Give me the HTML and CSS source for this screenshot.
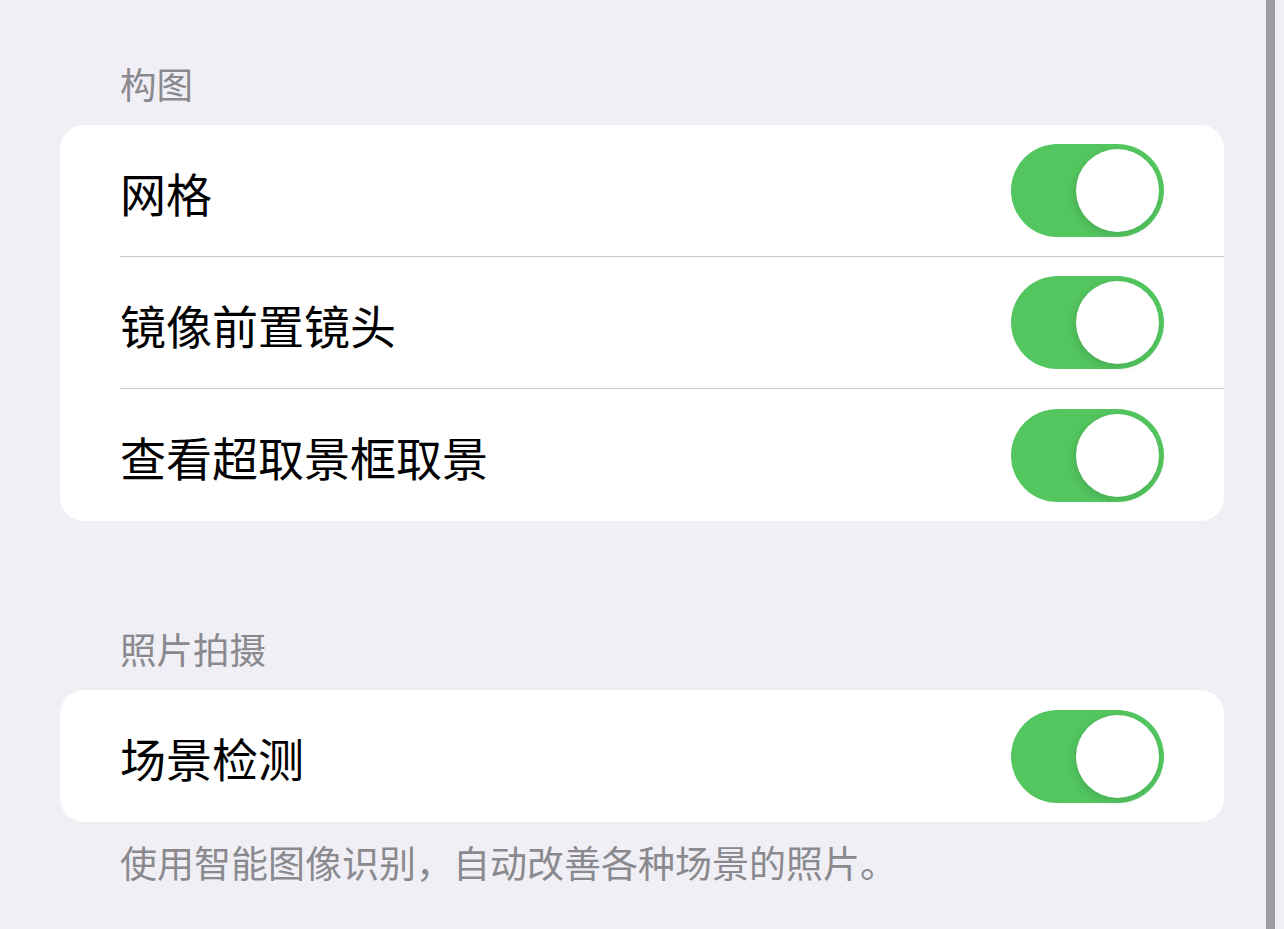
FILE: index.html
```html
<!DOCTYPE html>
<html lang="zh-CN">
<head>
<meta charset="utf-8">
<title>相机设置</title>
<link rel="stylesheet" href="styles.css">
</head>
<body>
<main class="page">
  <section class="group">
    <h2 class="group-header">构图</h2>
    <div class="card">
      <div class="row"><div class="row-inner"><span class="label">网格</span><span class="toggle on"><span class="knob"></span></span></div></div>
      <div class="row"><div class="row-inner"><span class="label">镜像前置镜头</span><span class="toggle on"><span class="knob"></span></span></div></div>
      <div class="row"><div class="row-inner"><span class="label">查看超取景框取景</span><span class="toggle on"><span class="knob"></span></span></div></div>
    </div>
  </section>
  <section class="group second">
    <h2 class="group-header">照片拍摄</h2>
    <div class="card">
      <div class="row"><div class="row-inner"><span class="label">场景检测</span><span class="toggle on"><span class="knob"></span></span></div></div>
    </div>
    <p class="group-footer">使用智能图像识别，自动改善各种场景的照片。</p>
  </section>
</main>
<div class="scrollbar"></div>
</body>
</html>
```

FILE: styles.css
```css
html, body {
  margin: 0;
  padding: 0;
}
body {
  background: #f0eff5;
  font-family: "Noto Sans CJK SC", "Noto Sans", sans-serif;
  width: 1284px;
  height: 929px;
  overflow: hidden;
}
.page {
  padding: 62px 0 0 60px;
  width: 1164px;
}
.group-header {
  margin: 0 0 19px 0;
  padding-left: 60px;
  font-size: 36.5px;
  line-height: 44px;
  font-weight: 400;
  color: #8a8a8e;
}
.second {
  margin-top: 106px;
}
.card {
  background: #ffffff;
  border-radius: 24px;
  overflow: hidden;
}
.row {
  padding-left: 60px;
}
.row-inner {
  height: 131px;
  display: flex;
  align-items: center;
  justify-content: space-between;
  padding-right: 60px;
  border-bottom: 1px solid #c8c7cc;
}
.row:last-child .row-inner {
  border-bottom: none;
  height: 132px;
}
.label {
  font-size: 46px;
  line-height: 56px;
  color: #000;
  margin-top: 2px;
}
.toggle {
  width: 153px;
  height: 93px;
  border-radius: 47px;
  background: #53c65f;
  display: flex;
  align-items: center;
  justify-content: flex-end;
  padding: 0 5px;
  box-sizing: border-box;
}
.knob {
  width: 83px;
  height: 83px;
  border-radius: 50%;
  background: #fff;
  box-shadow: -2px 3px 8px rgba(0,0,0,0.12), 0 0 1px rgba(0,0,0,0.06);
}
.group-footer {
  margin: 18px 0 0 0;
  padding-left: 60px;
  font-size: 37px;
  line-height: 44px;
  color: #8a8a8e;
}
.scrollbar {
  position: fixed;
  top: 0;
  left: 1266px;
  width: 9px;
  height: 929px;
  background: #9c9ba1;
}
```
